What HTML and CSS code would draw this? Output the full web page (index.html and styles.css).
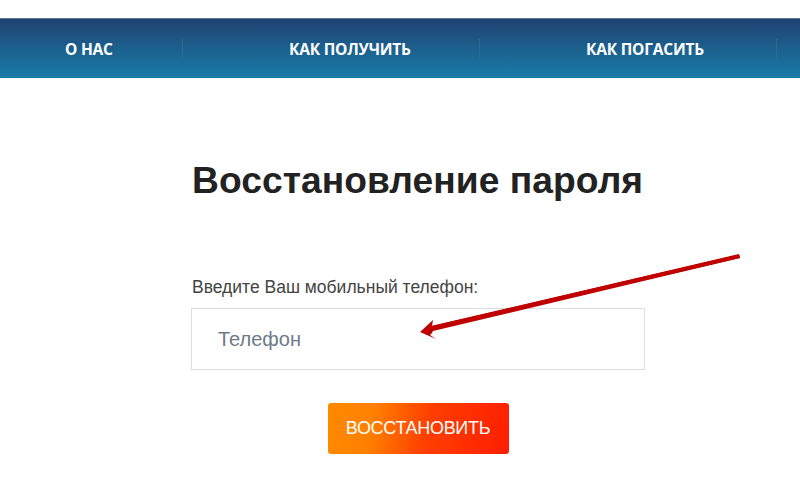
FILE: index.html
```html
<!DOCTYPE html>
<html lang="ru">
<head>
<meta charset="utf-8">
<title>Восстановление пароля</title>
<link rel="stylesheet" href="styles.css">
</head>
<body>
<nav class="nav">
  <a class="nav-item first" href="#">О НАС</a>
  <a class="nav-item" href="#">КАК ПОЛУЧИТЬ</a>
  <a class="nav-item" href="#">КАК ПОГАСИТЬ</a>
</nav>
<main class="main">
  <h1 class="title">Восстановление пароля</h1>
  <label class="label" for="phone">Введите Ваш мобильный телефон:</label>
  <input class="input" id="phone" type="text" placeholder="Телефон">
  <div class="actions">
    <button class="btn" type="button">ВОССТАНОВИТЬ</button>
  </div>
</main>
<svg class="arrow" width="800" height="481" viewBox="0 0 800 481">
  <polygon points="739,254 740,258 433,331 432,333 430,335 436,339 420,332 433,320 432,326" fill="#c00000"/>
  <polygon points="739,254.5 740,258 433,329 431,326" fill="#c00000"/>
</svg>
</body>
</html>
```
FILE: styles.css
```css
* { box-sizing: border-box; }
html, body { margin: 0; padding: 0; background: #fff; }
body {
  width: 800px;
  height: 481px;
  overflow: hidden;
  position: relative;
  font-family: "Liberation Sans", Arial, sans-serif;
}
.nav {
  margin-top: 18px;
  height: 60px;
  display: flex;
  align-items: center;
  background: linear-gradient(to bottom, #1f4370 0%, #1b6593 60%, #1a7ca8 100%);
  border-top: 1px solid #5d7596;
}
.nav-item {
  display: block;
  width: 297px;
  height: 20px;
  line-height: 20px;
  padding-left: 106px;
  border-right: 1px solid #2a6b94;
  color: #fff;
  text-decoration: none;
  font-family: "Open Sans", sans-serif;
  font-weight: 700;
  font-size: 15.5px;
  letter-spacing: -0.2px;
  white-space: nowrap;
}
.nav-item.first {
  width: 183px;
  padding-left: 65px;
}
.main {
  width: 454px;
  margin-left: 191px;
  padding-top: 80px;
  display: flex;
  flex-direction: column;
}
.title {
  margin: 0 0 0 1px;
  font-size: 37.2px;
  font-weight: 700;
  color: #222;
  line-height: 44px;
  letter-spacing: 0.05px;
  white-space: nowrap;
}
.label {
  margin-top: 75px;
  margin-left: 1px;
  font-size: 17.5px;
  color: #444;
  line-height: 20px;
  white-space: nowrap;
}
.input {
  margin-top: 11px;
  width: 454px;
  height: 62px;
  border: 1px solid #dcdee3;
  padding: 0 26px;
  font-family: "Liberation Sans", Arial, sans-serif;
  font-size: 20px;
  color: #333;
  outline: none;
}
.input::placeholder { color: #6e7a86; }
.actions {
  display: flex;
  justify-content: center;
  margin-top: 33px;
}
.btn {
  width: 181px;
  height: 51px;
  border: none;
  border-radius: 3px;
  background: linear-gradient(100deg, #ff8a00 0%, #ff8000 25%, #ff3e00 55%, #ff1e00 100%);
  color: #fff;
  font-family: "Liberation Sans", Arial, sans-serif;
  font-size: 18px;
  letter-spacing: -0.3px;
  cursor: pointer;
}
.arrow {
  position: absolute;
  left: 0;
  top: 0;
  pointer-events: none;
}
```
